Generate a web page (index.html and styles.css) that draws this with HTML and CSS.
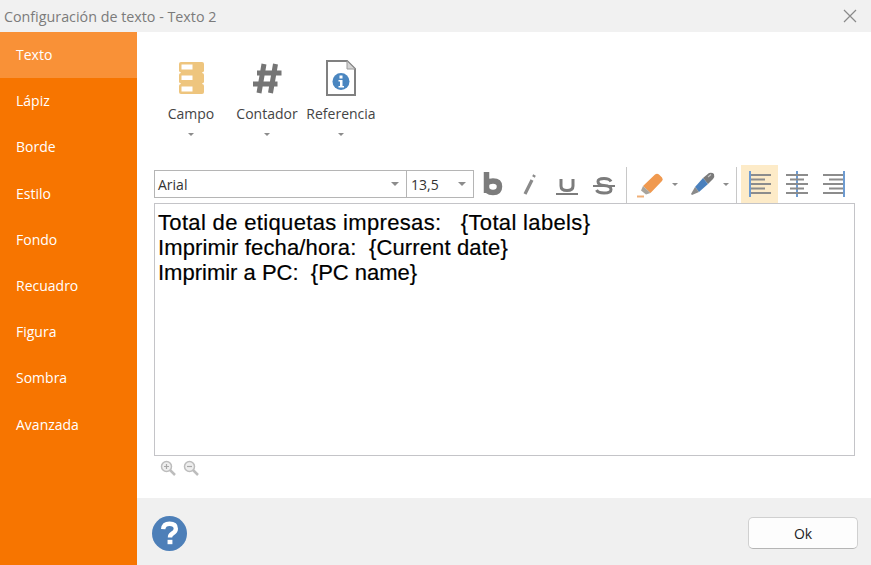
FILE: index.html
```html
<!DOCTYPE html>
<html lang="es">
<head>
    <meta charset="UTF-8">
    <meta name="viewport" content="width=device-width, initial-scale=1.0">
    <title>Configuración de texto</title>
    <link rel="stylesheet" href="styles.css">
</head>
<body>
    <div class="window">
        <div class="title-bar">
            <span class="title-text">Configuración de texto - Texto 2</span>
            <svg class="close-icon" width="14" height="14" viewBox="0 0 14 14">
                <path d="M1 1L13 13M13 1L1 13" stroke="#8a8a8a" stroke-width="1.2" fill="none"/>
            </svg>
        </div>

        <div class="window-body">
            <ul class="side-menu">
                <li class="side-item active">Texto</li>
                <li class="side-item">Lápiz</li>
                <li class="side-item">Borde</li>
                <li class="side-item">Estilo</li>
                <li class="side-item">Fondo</li>
                <li class="side-item">Recuadro</li>
                <li class="side-item">Figura</li>
                <li class="side-item">Sombra</li>
                <li class="side-item">Avanzada</li>
            </ul>

            <div class="main-col">
                <div class="content">
                    <div class="ribbon">
                        <div class="ribbon-btn btn-campo">
                            <svg width="25" height="36" viewBox="0 0 25 36">
                                <rect x="0" y="2" width="25" height="10.500" rx="2" fill="#eec57e"/>
                                <rect x="0" y="13" width="25" height="10.500" rx="2" fill="#eec57e"/>
                                <rect x="0" y="24" width="25" height="10" rx="2" fill="#eec57e"/>
                                <rect x="2" y="10" width="21" height="16" fill="#eec57e"/>
                                <rect x="2.500" y="4.500" width="11" height="5" fill="#fff"/>
                                <rect x="2.500" y="15.500" width="11" height="4.500" fill="#fff"/>
                                <rect x="2.500" y="26.500" width="11" height="5" fill="#fff"/>
                            </svg>
                            <span class="ribbon-label">Campo</span>
                            <span class="mini-arrow"></span>
                        </div>
                        <div class="ribbon-btn btn-contador">
                            <svg width="30" height="36" viewBox="0 0 30 36">
                                <path d="M12 4L7 33M23.500 4L18.500 33M5 13H29.500M1 24H25.500" stroke="#757575" stroke-width="5" fill="none"/>
                            </svg>
                            <span class="ribbon-label">Contador</span>
                            <span class="mini-arrow"></span>
                        </div>
                        <div class="ribbon-btn btn-referencia">
                            <svg width="30" height="36" viewBox="0 0 30 36">
                                <path d="M1 1H21L29 9V35H1Z" fill="#fff" stroke="#808080" stroke-width="2"/>
                                <path d="M21 1V9H29Z" fill="#d4d4d4" stroke="#9a9a9a" stroke-width="1"/>
                                <circle cx="15" cy="21.500" r="8.500" fill="#4a86c0"/>
                                <rect x="13.500" y="15.500" width="3" height="3" fill="#fff"/>
                                <path d="M12.500 20H16.500V26H18V27.500H12.500V26H14V21.500H12.500Z" fill="#fff"/>
                            </svg>
                            <span class="ribbon-label">Referencia</span>
                            <span class="mini-arrow"></span>
                        </div>
                    </div>

                    <div class="format-bar">
                        <div class="combo combo-font">
                            <span>Arial</span>
                            <span class="combo-arrow"></span>
                        </div>
                        <div class="combo combo-size">
                            <span>13,5</span>
                            <span class="combo-arrow"></span>
                        </div>
                        <div class="tool-group">
                            <div class="tool">
                                <svg width="22" height="24" viewBox="0 0 22 24"><path d="M4.500 0V21M4.500 13.500Q4.500 9 11 9Q17.500 9 17.500 14.500Q17.500 20.500 11 20.500Q4.500 20.500 4.500 15" stroke="#7c7c7c" stroke-width="5.500" fill="none"/></svg>
                            </div>
                            <div class="tool">
                                <svg width="22" height="24" viewBox="0 0 22 24"><path d="M6 22L13 8" stroke="#8a8a8a" stroke-width="3.200" fill="none"/><path d="M14.500 5L15.500 3" stroke="#8a8a8a" stroke-width="3" fill="none"/></svg>
                            </div>
                            <div class="tool">
                                <svg width="24" height="24" viewBox="0 0 24 24"><path d="M6 7V14Q6 18.500 12 18.500Q18 18.500 18 14V7" stroke="#7c7c7c" stroke-width="3" fill="none"/><rect x="1" y="21" width="22" height="2" fill="#7c7c7c"/></svg>
                            </div>
                            <div class="tool">
                                <svg width="24" height="24" viewBox="0 0 24 24"><path d="M19 9.500Q17.500 6.500 12 6.500Q6 6.500 6 9.500Q6 13 12 13.500Q19 14 19 17.500Q19 21 12 21Q6 21 4.500 18" stroke="#7c7c7c" stroke-width="3" fill="none"/><rect x="1" y="13" width="22" height="2" fill="#7c7c7c"/></svg>
                            </div>
                        </div>
                        <span class="tool-sep"></span>
                        <div class="tool-group">
                            <div class="tool tool-drop">
                                <svg width="28" height="27" viewBox="0 0 28 27">
                                    <path d="M7 15L19 3.500Q21 2 23 3.500L26 6.500Q27.500 8.500 26 10L14.500 22Z" fill="#f0994f"/>
                                    <path d="M7 15L14.500 22L10 23.500L5 19.500Z" fill="#a8a49c"/>
                                    <path d="M1 25.500H8" stroke="#f0b078" stroke-width="2"/>
                                </svg>
                                <span class="mini-arrow"></span>
                            </div>
                            <div class="tool tool-drop">
                                <svg width="26" height="27" viewBox="0 0 26 27">
                                    <path d="M14 7L20 2Q23 1 25 3Q26 6 24 8L19 13Z" fill="#7a7a7a"/>
                                    <path d="M14 7L19 13L10 21L6 16Z" fill="#4a80bd"/>
                                    <path d="M6 16L10 21L3 24L2 23Z" fill="#8a8a8a"/>
                                    <path d="M19 6L22 3.500" stroke="#c4c4c4" stroke-width="1.200"/>
                                </svg>
                                <span class="mini-arrow"></span>
                            </div>
                        </div>
                        <span class="tool-sep"></span>
                        <div class="align-group">
                            <div class="align-btn selected">
                                <svg width="24" height="26" viewBox="0 0 24 26"><rect x="1" width="2" height="26" fill="#6d9bd1"/><path d="M3 4H23M3 8.500H17M3 13H23M3 17.500H17M3 22H23" stroke="#8c8c8c" stroke-width="2"/></svg>
                            </div>
                            <div class="align-btn">
                                <svg width="24" height="26" viewBox="0 0 24 26"><rect x="11" width="2" height="26" fill="#6d9bd1"/><path d="M1 4H23M5 8.500H19M1 13H23M5 17.500H19M1 22H23" stroke="#8c8c8c" stroke-width="2"/></svg>
                            </div>
                            <div class="align-btn">
                                <svg width="24" height="26" viewBox="0 0 24 26"><rect x="21" width="2" height="26" fill="#6d9bd1"/><path d="M1 4H21M7 8.500H21M1 13H21M7 17.500H21M1 22H21" stroke="#8c8c8c" stroke-width="2"/></svg>
                            </div>
                        </div>
                    </div>

                    <div class="editor">
                        <div class="editor-line line-first">Total de etiquetas impresas:   {Total labels}</div>
                        <div class="editor-line line-second">Imprimir fecha/hora:  {Current date}</div>
                        <div class="editor-line">Imprimir a PC:  {PC name}</div>
                    </div>

                    <div class="zoom-row">
                        <svg width="16" height="16" viewBox="0 0 16 16">
                            <circle cx="6.500" cy="6.500" r="5" fill="#eee" stroke="#bdbdbd" stroke-width="1.500"/>
                            <path d="M10 10L15 15" stroke="#bdbdbd" stroke-width="2.500"/>
                            <path d="M4 6.500H9M6.500 4V9" stroke="#a8a8a8" stroke-width="1.200"/>
                        </svg>
                        <svg width="16" height="16" viewBox="0 0 16 16">
                            <circle cx="6.500" cy="6.500" r="5" fill="#eee" stroke="#bdbdbd" stroke-width="1.500"/>
                            <path d="M10 10L15 15" stroke="#bdbdbd" stroke-width="2.500"/>
                            <path d="M4 6.500H9" stroke="#a8a8a8" stroke-width="1.200"/>
                        </svg>
                    </div>
                </div>

                <div class="footer">
                    <svg width="35" height="35" viewBox="0 0 36 36">
                        <circle cx="18" cy="18" r="18" fill="#4d7fb8"/>
                        <path d="M11.500 13.500Q12 8 18 8Q24.500 8 24.500 13Q24.500 16 21 18Q18.500 19.500 18.500 22" stroke="#fff" stroke-width="4.500" fill="none"/>
                        <rect x="16" y="24.500" width="5" height="4.500" fill="#fff"/>
                    </svg>
                    <button class="ok-btn">Ok</button>
                </div>
            </div>
        </div>
    </div>
</body>
</html>
```

FILE: styles.css
```css
* {
    margin: 0;
    padding: 0;
    box-sizing: border-box;
}

body {
    font-family: 'Open Sans', 'Noto Sans', sans-serif;
    background: #fff;
    width: 871px;
    height: 565px;
    overflow: hidden;
}

.window {
    height: 565px;
    display: flex;
    flex-direction: column;
}

.title-bar {
    height: 32px;
    background: #f1f1f1;
    display: flex;
    align-items: center;
    justify-content: space-between;
    padding: 0 14px 0 4px;
}

.title-text {
    color: #7b7b7b;
    font-size: 14.3px;
}

.window-body {
    flex: 1;
    display: flex;
    min-height: 0;
}

.side-menu {
    width: 137px;
    background: #f77500;
    list-style: none;
}

.side-item {
    height: 46.2px;
    line-height: 45px;
    padding-left: 16px;
    color: #fff;
    font-size: 14px;
}

.side-item.active {
    background: #f99137;
}

.main-col {
    flex: 1;
    display: flex;
    flex-direction: column;
}

.content {
    flex: 1;
    display: flex;
    flex-direction: column;
    padding: 28px 16px 0 17px;
}

.ribbon {
    display: flex;
    height: 82px;
}

.ribbon-btn {
    display: flex;
    flex-direction: column;
    align-items: center;
}

.btn-campo { width: 74px; }
.btn-contador { width: 78px; }
.btn-referencia { width: 70px; }

.ribbon-label {
    margin-top: 8px;
    font-size: 14px;
    line-height: 20px;
    color: #444;
}

.ribbon-btn .mini-arrow {
    margin-top: 9px;
}

.mini-arrow {
    width: 0;
    height: 0;
    border-left: 3.5px solid transparent;
    border-right: 3.5px solid transparent;
    border-top: 3.5px solid #8c8c8c;
}

.format-bar {
    display: flex;
    align-items: center;
    height: 38px;
    margin-top: 23px;
}

.combo {
    height: 28px;
    border: 1px solid #b5b5b5;
    display: flex;
    align-items: center;
    justify-content: space-between;
    padding: 0 7px 0 3px;
    font-size: 14px;
    color: #333;
}

.combo-font {
    width: 253px;
}

.combo-size {
    width: 68px;
    margin-left: -1px;
    padding-left: 4px;
}

.combo-arrow {
    width: 0;
    height: 0;
    border-left: 4.5px solid transparent;
    border-right: 4.5px solid transparent;
    border-top: 4.5px solid #8c8c8c;
}

.tool-group {
    display: flex;
    align-items: center;
}

.tool {
    width: 37px;
    height: 36px;
    display: flex;
    align-items: center;
    justify-content: center;
}

.tool-drop {
    width: 52.5px;
    justify-content: flex-start;
    padding-left: 9px;
    gap: 8px;
}

.tool-sep {
    width: 1px;
    height: 36px;
    align-self: flex-end;
    background: #c8c8c8;
    margin-left: 4px;
}

.align-group {
    display: flex;
    margin-left: 4px;
}

.align-btn {
    width: 37px;
    height: 38px;
    display: flex;
    align-items: center;
    justify-content: center;
}

.align-btn.selected {
    background: #fdebc8;
}

.editor {
    height: 253px;
    border: 1.5px solid #c4c4c8;
    padding: 6px 3px;
    font-family: 'Liberation Sans', Arial, sans-serif;
    font-size: 22px;
    line-height: 25px;
    color: #000;
    -webkit-text-stroke: 0.2px #000;
}

.editor-line {
    white-space: pre;
}

.line-first {
    letter-spacing: 0.34px;
}

.line-second {
    letter-spacing: 0.14px;
}

.zoom-row {
    display: flex;
    gap: 7px;
    padding: 4px 0 0 6px;
}

.footer {
    height: 67px;
    background: #f0f0f0;
    display: flex;
    align-items: center;
    justify-content: space-between;
    padding: 3px 13px 0 15px;
}

.ok-btn {
    width: 110px;
    height: 32px;
    background: #fdfdfd;
    border: 1px solid #d0d0d0;
    border-bottom-color: #b5b5b5;
    border-radius: 5px;
    font-family: 'Open Sans', 'Noto Sans', sans-serif;
    font-size: 14px;
    color: #222;
}
```
